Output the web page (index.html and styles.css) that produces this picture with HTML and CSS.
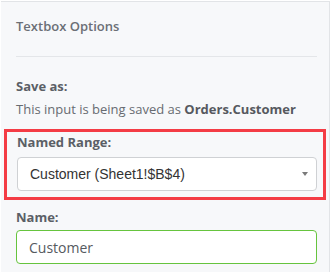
FILE: index.html
```html
<!DOCTYPE html>
<html lang="en">

<head>
    <meta charset="UTF-8">
    <meta name="viewport" content="width=device-width, initial-scale=1.0">
    <title>Textbox Options</title>
    <link rel="stylesheet" href="styles.css">
</head>

<body>
    <div id="panel">
        <h3 class="panel-title">Textbox Options</h3>
        <hr class="divider">

        <div class="field">
            <label class="field-label">Save as:</label>
            <p class="field-text">This input is being saved as <b>Orders.Customer</b></p>
        </div>

        <div class="field highlight">
            <label class="field-label">Named Range:</label>
            <div class="select-box">
                <select class="select-input">
                    <option>Customer (Sheet1!$B$4)</option>
                </select>
                <svg class="select-arrow" width="6" height="4" viewBox="0 0 6 4">
                    <path d="M0 0 L6 0 L3 4 Z" fill="#7a7a7a" />
                </svg>
            </div>
        </div>

        <div class="field name-field">
            <label class="field-label">Name:</label>
            <input class="text-input" type="text" value="Customer">
        </div>
    </div>
</body>

</html>
```

FILE: styles.css
```css
html,
body {
    margin: 0;
    padding: 0;
    background-color: #ffffff;
}

body {
    font-family: "Open Sans", sans-serif;
    padding-top: 1px;
    padding-left: 1px;
    height: 100vh;
    box-sizing: border-box;
    overflow: hidden;
}

#panel {
    background-color: #f7f8fa;
    border-top: 1px solid #e2e4e7;
    border-right: 1px solid #e2e4e7;
    padding: 15px 12px 10px 15px;
    min-height: 100%;
    box-sizing: border-box;
}

.panel-title {
    margin: 0;
    font-size: 13px;
    line-height: 18px;
    font-weight: 600;
    color: #6b6f76;
}

.divider {
    margin: 21px 0 0 0;
    border: none;
    border-top: 1px solid #e4e6e9;
    height: 0;
}

.field {
    display: flex;
    flex-direction: column;
}

.field-label {
    font-size: 13px;
    line-height: 18px;
    font-weight: 700;
    color: #5b5f66;
}

.field:first-of-type {
    margin-top: 20px;
}

.field-text {
    margin: 5px 0 0 0;
    font-size: 13px;
    line-height: 18px;
    color: #676b71;
}

.field-text b {
    font-weight: 700;
    color: #56595f;
}

.highlight {
    margin: 11px -9px 0 -12px;
    padding: 1px 6px 6px 10px;
    border: 3px solid #f43c45;
}

.select-box {
    position: relative;
    margin-top: 6px;
}

.select-input {
    appearance: none;
    -webkit-appearance: none;
    width: 100%;
    height: 34px;
    box-sizing: border-box;
    border: 1px solid #cfd1d4;
    border-radius: 4px;
    background-color: #ffffff;
    padding: 0 12px;
    font-family: "Liberation Sans", Arial, sans-serif;
    font-size: 14px;
    color: #333333;
    outline: none;
}

.select-arrow {
    position: absolute;
    right: 9px;
    top: 15px;
}

.name-field {
    margin-top: 8px;
}

.text-input {
    margin-top: 4px;
    height: 34px;
    box-sizing: border-box;
    border: 1px solid #66c43e;
    border-radius: 4px;
    background-color: #ffffff;
    padding: 0 12px;
    font-family: "Open Sans", sans-serif;
    font-size: 14px;
    color: #555a60;
    outline: none;
}
```
